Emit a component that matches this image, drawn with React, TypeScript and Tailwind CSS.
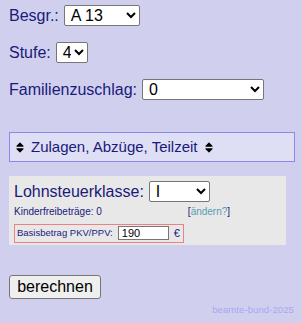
import React from "react";
import { FaSort } from "react-icons/fa";

export default function App() {
  const selectCls =
    "border border-[#767676] rounded-[2px] bg-white text-black h-[21px] pl-[2px] cursor-default";
  return (
    <div className="w-[302px] h-[323px] bg-[#d0d0ee] text-[#1a1a7a] font-['Liberation_Sans',Arial,sans-serif] pl-[9px] pr-[7px] pt-[5px] relative overflow-hidden">
      <div className="flex items-center h-[21px] text-[16px]">
        <span>Besgr.:</span>
        <select className={selectCls + " ml-[5px] w-[76px] text-[16px]"} defaultValue="A 13">
          <option>A 13</option>
        </select>
      </div>
      <div className="flex items-center h-[21px] mt-[16px] text-[16px]">
        <span>Stufe:</span>
        <select className={selectCls + " ml-[5px] w-[32px] text-[16px]"} defaultValue="4">
          <option>4</option>
        </select>
      </div>
      <div className="flex items-center h-[21px] mt-[16px] text-[16px]">
        <span>Familienzuschlag:</span>
        <select className={selectCls + " ml-[5px] w-[122px] text-[16px]"} defaultValue="0">
          <option>0</option>
        </select>
      </div>

      <div className="mt-[32px] h-[30px] border border-[#8888ee] bg-[#dedef4] flex items-center pl-[6px] text-[15px]">
        <FaSort className="w-[8px] h-[13px] text-black" />
        <span className="ml-[7px]">Zulagen, Abzüge, Teilzeit</span>
        <FaSort className="w-[8px] h-[13px] text-black ml-[7px]" />
      </div>

      <div className="mt-[14px] w-[277px] h-[69px] bg-[#e8e8e8] pl-[5px] pr-[3px] pt-[5px]">
        <div className="flex items-center h-[21px] text-[16px]">
          <span>Lohnsteuerklasse:</span>
          <select className={selectCls + " ml-[5px] w-[61px] h-[20px] text-[16px]"} defaultValue="I">
            <option>I</option>
          </select>
        </div>
        <div className="flex items-center h-[16px] text-[10px] mt-[1px]">
          <span>Kinderfreibeträge: 0</span>
          <span className="ml-[86px]">
            [<span className="text-[#5a9cb0]">ändern?</span>]
          </span>
        </div>
        <div className="inline-flex items-center h-[19px] border border-[#f08080] pl-[2px] pr-[3px] text-[9.5px]">
          <span>Basisbetrag PKV/PPV:</span>
          <input
            className="ml-[5px] w-[51px] h-[14px] border border-[#767676] bg-white text-black text-[11px] pl-[3px] outline-none"
            defaultValue="190"
          />
          <span className="ml-[5px] text-[11px]">€</span>
        </div>
      </div>

      <div className="mt-[30px]">
        <button className="w-[92px] h-[24px] border border-[#767676] rounded-[3px] bg-[#efefef] text-black text-[16px] leading-none">
          berechnen
        </button>
      </div>
      <div className="absolute right-[8px] bottom-[5px] text-[9.7px] text-[#a8a8f0]">beamte-bund-2025</div>
    </div>
  );
}
